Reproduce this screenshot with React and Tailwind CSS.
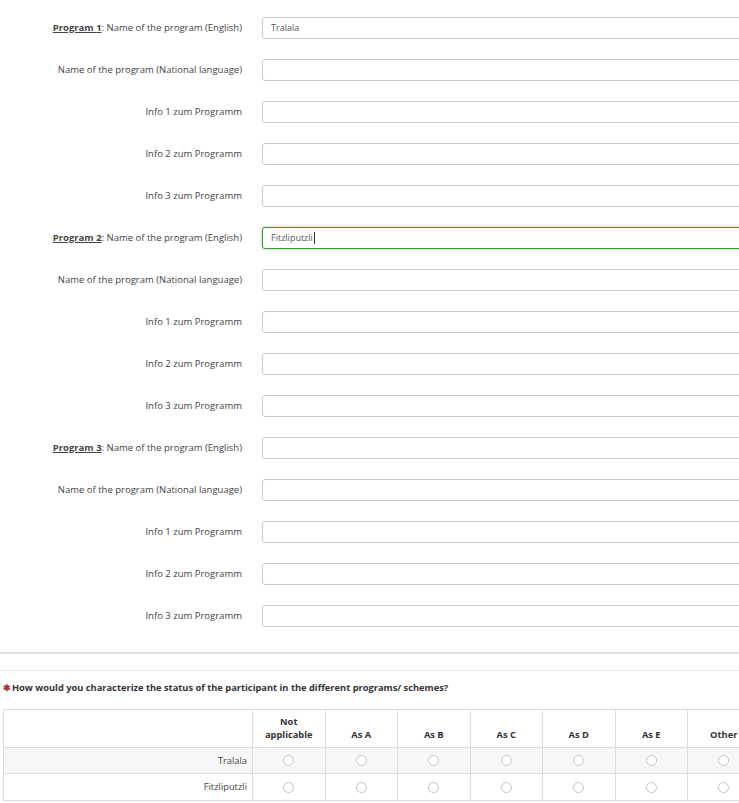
import React from "react";

const programs = [
  { n: 1, value: "Tralala" },
  { n: 2, value: "Fitzliputzli", focused: true },
  { n: 3, value: "" },
];

const cols = ["Not applicable", "As A", "As B", "As C", "As D", "As E", "Other"];

const Field = ({ label, value = "", focused = false }) => (
  <div className="flex items-center h-[42px]">
    <div className="w-[242px] shrink-0 text-right text-[9.5px] text-[#444]">{label}</div>
    <div className="ml-[20px] shrink-0">
      <div
        className={
          focused
            ? "w-[520px] h-[22px] rounded-[3px] border border-[#3a9a3a] shadow-[0_0_3px_rgba(60,150,60,0.5)] bg-white flex items-center px-[8px] text-[9px] text-[#555]"
            : "w-[520px] h-[22px] rounded-[3px] border border-[#cccccc] bg-white flex items-center px-[8px] text-[9px] text-[#555]"
        }
      >
        {value}
        {focused && <span className="inline-block w-px h-[12px] bg-[#333] ml-px" />}
      </div>
    </div>
  </div>
);

const Radio = () => (
  <span className="inline-block w-[11px] h-[11px] rounded-full border border-[#c4c4c4] bg-white" />
);

export default function App() {
  return (
    <div
      className="w-[739px] h-[803px] overflow-hidden bg-white"
      style={{ fontFamily: '"Open Sans", sans-serif' }}
    >
      <div className="pt-[7px]">
        {programs.map((p) => (
          <div key={p.n}>
            <Field
              label={
                <>
                  <span className="font-bold underline">Program {p.n}</span>: Name of the program (English)
                </>
              }
              value={p.value}
              focused={p.focused}
            />
            <Field label="Name of the program (National language)" />
            <Field label="Info 1 zum Programm" />
            <Field label="Info 2 zum Programm" />
            <Field label="Info 3 zum Programm" />
          </div>
        ))}
      </div>

      <div className="mt-[15px] border-t-2 border-[#e2e2e2]" />
      <div className="mt-[16px] border-t border-[#e6e6e6]" />

      <div className="mt-[11px] pl-[3px] text-[9.3px] font-bold text-[#333] flex items-center h-[12px]">
        <span className="text-[#b03030] mr-[1px]">✱</span>
        How would you characterize the status of the participant in the different programs/ schemes?
      </div>

      <table className="mt-[15px] ml-[3px] border-collapse w-[757px] table-fixed text-[9.3px] text-[#333]">
        <colgroup>
          <col className="w-[249px]" />
          {cols.map((c) => (
            <col key={c} className="w-[72.5px]" />
          ))}
        </colgroup>
        <thead>
          <tr className="h-[38px]">
            <th className="border border-[#dddddd]" />
            {cols.map((c) => (
              <th key={c} className="border border-[#dddddd] font-bold align-bottom text-center leading-[13px] px-[4px] pb-[6px]">
                {c === "Not applicable" ? (
                  <>
                    Not
                    <br />
                    applicable
                  </>
                ) : (
                  c
                )}
              </th>
            ))}
          </tr>
        </thead>
        <tbody>
          {["Tralala", "Fitzliputzli"].map((r, i) => (
            <tr key={r} className={i === 0 ? "h-[26px] bg-[#f7f7f7]" : "h-[27px] bg-white"}>
              <td className="border border-[#dddddd] text-right pr-[5px] font-normal text-[#444]">{r}</td>
              {cols.map((c) => (
                <td key={c} className="border border-[#dddddd] text-center align-middle">
                  <div className="flex justify-center items-center">
                    <Radio />
                  </div>
                </td>
              ))}
            </tr>
          ))}
        </tbody>
      </table>
    </div>
  );
}
